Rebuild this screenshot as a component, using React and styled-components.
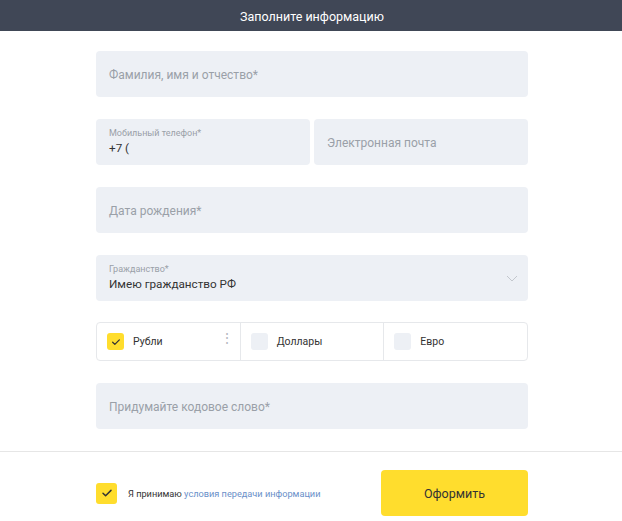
import React, { useState } from "react";
import styled, { createGlobalStyle } from "styled-components";

const GlobalStyle = createGlobalStyle`
  body {
    margin: 0;
    background: #fff;
    font-family: Roboto, "Liberation Sans", Arial, sans-serif;
  }
`;

const currencies = ["Рубли", "Доллары", "Евро"];

const Check = ({ size = 10 }) => (
  <svg width={size} height={size} viewBox="0 0 12 12" fill="none">
    <path d="M2 6.3l2.6 2.5L10 3.4" stroke="#333" strokeWidth="1.5" strokeLinecap="round" strokeLinejoin="round" />
  </svg>
);

const App = () => {
  const [currency, setCurrency] = useState("Рубли");
  const [agree, setAgree] = useState(true);

  return (
    <Page>
      <GlobalStyle />
      <Header>Заполните информацию</Header>
      <Form>
        <Field>
          <Placeholder>Фамилия, имя и отчество*</Placeholder>
        </Field>
        <Row>
          <Field>
            <Label>Мобильный телефон*</Label>
            <Value>+7 (</Value>
          </Field>
          <Field>
            <Placeholder>Электронная почта</Placeholder>
          </Field>
        </Row>
        <Field>
          <Placeholder>Дата рождения*</Placeholder>
        </Field>
        <Field>
          <Label>Гражданство*</Label>
          <Value>Имею гражданство РФ</Value>
          <Chevron width="12" height="7" viewBox="0 0 12 7" fill="none">
            <path d="M1 1l5 5 5-5" stroke="#c3c7cd" strokeWidth="1" />
          </Chevron>
        </Field>
        <CurrencyBox>
          {currencies.map((c) => (
            <CurrencyCell key={c} onClick={() => setCurrency(c)}>
              <Box $checked={currency === c}>{currency === c && <Check size={10} />}</Box>
              <CurrencyName>{c}</CurrencyName>
              {c === "Рубли" && <Dots>⋮</Dots>}
            </CurrencyCell>
          ))}
        </CurrencyBox>
        <Field>
          <Placeholder>Придумайте кодовое слово*</Placeholder>
        </Field>
      </Form>
      <Footer>
        <FooterRow>
          <Agree onClick={() => setAgree(!agree)}>
            <BigBox $checked={agree}>{agree && <Check size={12} />}</BigBox>
            <AgreeText>
              Я принимаю <Link>условия передачи информации</Link>
            </AgreeText>
          </Agree>
          <Submit>Оформить</Submit>
        </FooterRow>
      </Footer>
    </Page>
  );
};

const Page = styled.div`
  width: 100%;
`;

const Header = styled.div`
  height: 31px;
  background: #404756;
  color: #fff;
  font-size: 12.5px;
  display: flex;
  align-items: center;
  justify-content: center;
  padding: 1px 0 0 2px;
  box-sizing: border-box;
`;

const Form = styled.div`
  width: 432px;
  margin: 20px auto 0;
  position: relative;
  left: 1px;
  display: flex;
  flex-direction: column;
  gap: 22px;
  padding-bottom: 22px;
`;

const Row = styled.div`
  display: flex;
  gap: 4px;
  & > * {
    flex: 1;
  }
`;

const Field = styled.div`
  position: relative;
  height: 46px;
  background: #edf0f5;
  border-radius: 4px;
  padding: 0 13px;
  box-sizing: border-box;
  display: flex;
  flex-direction: column;
  justify-content: center;
`;

const Placeholder = styled.div`
  font-size: 12px;
  color: #9aa0a8;
  padding-top: 1px;
`;

const Label = styled.div`
  font-size: 9px;
  color: #9aa0a8;
  margin-bottom: 3px;
  margin-top: -1px;
`;

const Value = styled.div`
  font-size: 11.7px;
  color: #333;
`;

const Chevron = styled.svg`
  position: absolute;
  right: 10px;
  top: 20px;
`;

const CurrencyBox = styled.div`
  height: 39px;
  border: 1px solid #e6e8eb;
  border-radius: 4px;
  display: flex;
  box-sizing: border-box;
  margin-top: -1px;
`;

const CurrencyCell = styled.div`
  position: relative;
  flex: 1;
  display: flex;
  align-items: center;
  padding-left: 10px;
  gap: 9px;
  cursor: pointer;
  & + & {
    border-left: 1px solid #e6e8eb;
  }
`;

const Box = styled.div`
  width: 17px;
  height: 17px;
  border-radius: 3px;
  background: ${({ $checked }) => ($checked ? "#ffdd2d" : "#edf0f5")};
  display: flex;
  align-items: center;
  justify-content: center;
`;

const CurrencyName = styled.span`
  font-size: 10.5px;
  color: #333;
`;

const Dots = styled.span`
  position: absolute;
  right: 6px;
  top: 7px;
  font-size: 14px;
  color: #b5b9bf;
`;

const Footer = styled.div`
  border-top: 1px solid #e6e6e6;
  padding-top: 18px;
`;

const FooterRow = styled.div`
  width: 432px;
  margin: 0 auto;
  position: relative;
  left: 1px;
  display: flex;
  align-items: center;
  justify-content: space-between;
`;

const Agree = styled.div`
  display: flex;
  align-items: center;
  gap: 11px;
  cursor: pointer;
`;

const BigBox = styled.div`
  width: 21px;
  height: 21px;
  border-radius: 3px;
  background: ${({ $checked }) => ($checked ? "#ffdd2d" : "#edf0f5")};
  display: flex;
  align-items: center;
  justify-content: center;
`;

const AgreeText = styled.span`
  font-size: 9.2px;
  color: #333;
`;

const Link = styled.span`
  color: #6a8fc9;
`;

const Submit = styled.button`
  width: 147px;
  height: 46px;
  border: none;
  border-radius: 4px;
  background: #ffdd2d;
  color: #333;
  font-family: inherit;
  font-size: 12.5px;
  cursor: pointer;
`;

export default App;
